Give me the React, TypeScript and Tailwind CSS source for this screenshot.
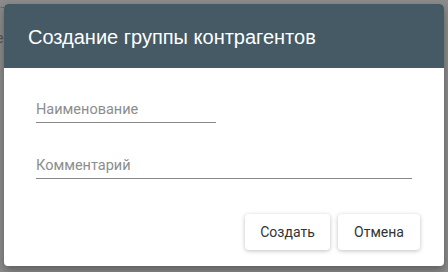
import React from 'react';

export default function App() {
  return (
    <div className="relative w-[448px] h-[272px] overflow-hidden bg-[#8c8c8c] font-['Roboto',sans-serif]">
      {/* page behind the overlay */}
      <div className="absolute left-0 top-0 text-[10px] leading-none text-[#555]">…</div>
      <div className="absolute left-[-4px] top-[28px] text-[14px] text-[#555]">е</div>

      <div className="absolute left-[4px] top-[4px] w-[440px] h-[262px] bg-white rounded-[4px] shadow-[0_4px_10px_rgba(0,0,0,0.35)] overflow-hidden flex flex-col">
        <div className="h-[64px] shrink-0 bg-[#455a64] flex items-center px-[24px]">
          <h1 className="text-white text-[20px] font-['Liberation_Sans',Arial,sans-serif] pt-[1px]">
            Создание группы контрагентов
          </h1>
        </div>

        <div className="flex-1 flex flex-col px-[32px] pt-[34px]">
          <div className="w-[180px] border-b border-[#8a8a8a] pb-[4px]">
            <span className="block text-[14.5px] leading-[16px] text-[#8d8d8d]">Наименование</span>
          </div>
          <div className="mt-[35px] w-[376px] border-b border-[#8a8a8a] pb-[4px]">
            <span className="block text-[14.5px] leading-[16px] text-[#8d8d8d]">Комментарий</span>
          </div>
        </div>

        <div className="flex justify-end gap-[8px] px-[24px] pb-[16px]">
          <button className="h-[36px] w-[85px] rounded-[4px] bg-white text-[14px] text-[#333] shadow-[0_1px_4px_rgba(0,0,0,0.25)]">
            Создать
          </button>
          <button className="h-[36px] w-[82px] rounded-[4px] bg-white text-[14px] text-[#333] shadow-[0_1px_4px_rgba(0,0,0,0.25)]">
            Отмена
          </button>
        </div>
      </div>
    </div>
  );
}
